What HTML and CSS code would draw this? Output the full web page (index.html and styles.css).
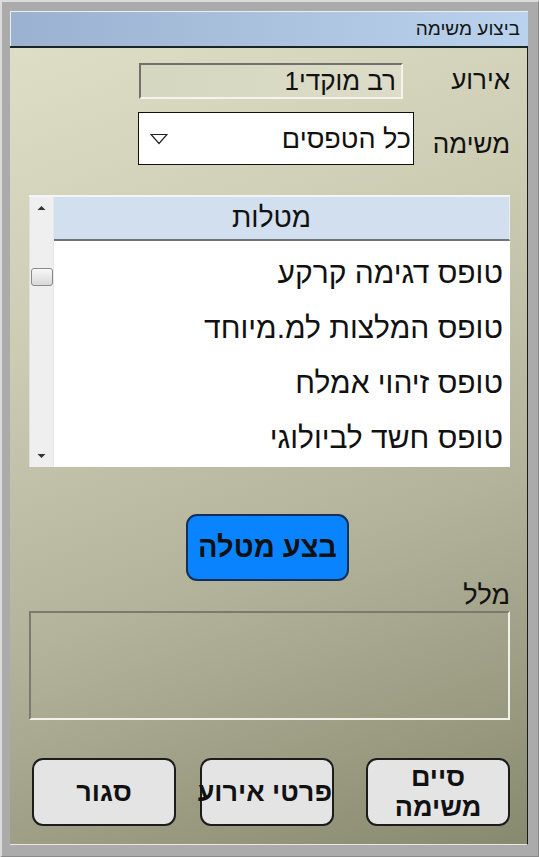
FILE: index.html
```html
<!DOCTYPE html>
<html lang="he" dir="rtl">
<head>
<meta charset="utf-8">
<title>ביצוע משימה</title>
<link rel="stylesheet" href="styles.css">
</head>
<body>
<div class="window">
  <div class="titlebar">ביצוע משימה</div>
  <div class="panel">
    <div class="field-row row-event">
      <span class="label">אירוע</span>
      <div class="readonly">רב מוקדי1</div>
    </div>
    <div class="field-row row-task">
      <span class="label">משימה</span>
      <div class="select">
        <span class="select-text">כל הטפסים</span>
        <svg class="select-arrow" width="18" height="12" viewBox="0 0 18 12"><path d="M1 1.5 H17 L9 10.5 Z" fill="none" stroke="#222" stroke-width="1.2"/></svg>
      </div>
    </div>
    <div class="list">
      <div class="list-main">
        <div class="list-header">מטלות</div>
        <div class="list-body">
          <div class="list-row">טופס דגימה קרקע</div>
          <div class="list-row">טופס המלצות למ.מיוחד</div>
          <div class="list-row">טופס זיהוי אמלח</div>
          <div class="list-row">טופס חשד לביולוגי</div>
        </div>
      </div>
      <div class="scrollbar">
        <svg class="sb-arrow" width="9" height="6" viewBox="0 0 9 6"><path d="M0.5 5 L4.5 1 L8.5 5 Z" fill="#333"/></svg>
        <div class="sb-thumb"></div>
        <div class="sb-space"></div>
        <svg class="sb-arrow" width="9" height="6" viewBox="0 0 9 6"><path d="M0.5 1 L4.5 5 L8.5 1 Z" fill="#333"/></svg>
      </div>
    </div>
    <div class="action-wrap">
      <button class="btn btn-blue">בצע מטלה</button>
    </div>
    <div class="memo-label">מלל</div>
    <div class="memo"></div>
    <div class="bottom-buttons">
      <button class="btn btn-gray btn-finish">סיים<br>משימה</button>
      <button class="btn btn-gray btn-details">פרטי אירוע</button>
      <button class="btn btn-gray btn-close">סגור</button>
    </div>
  </div>
</div>
</body>
</html>
```

FILE: styles.css
```css
* { box-sizing: border-box; }
html, body {
  margin: 0;
  padding: 0;
  width: 539px;
  height: 857px;
  overflow: hidden;
  background: #aaaaaa;
  font-family: "Liberation Sans", "DejaVu Sans", Arial, sans-serif;
  color: #111;
}
.window {
  width: 539px;
  height: 857px;
  background: #ababab;
  border-top: 2px solid #dcdcdc;
  border-left: 2px solid #dcdcdc;
  border-right: 1px solid #8a8a8a;
  border-bottom: 1px solid #8a8a8a;
  padding: 9px 10px 11px 8px;
  display: flex;
  flex-direction: column;
}
.titlebar {
  height: 35px;
  flex: 0 0 35px;
  background: linear-gradient(90deg, #9ab2cf 0%, #aac2de 50%, #bad2ee 100%);
  border-top: 1px solid #e8eef6;
  border-left: 1px solid #e8eef6;
  font-size: 19px;
  line-height: 33px;
  padding-right: 8px;
  color: #151515;
}
.panel {
  flex: 1;
  background: linear-gradient(160deg, #deddc6 0%, #cdcdb4 30%, #b2b39a 62%, #999a80 85%, #888a70 100%);
  border-top: 2px solid #1a2624;
  border-right: 1px solid #1a1a1a;
  border-bottom: 1px solid #e8e8e0;
  padding: 15px 17px 0 19px;
  display: flex;
  flex-direction: column;
}
.field-row {
  display: flex;
  align-items: center;
}
.label {
  font-size: 26px;
  flex: 0 0 96px;
  padding-right: 0;
}
.row-event .label { margin-top: -2px; }
.readonly {
  width: 264px;
  height: 36px;
  margin-right: 11px;
  border-top: 2px solid #707070;
  border-left: 2px solid #707070;
  border-bottom: 2px solid #f4f4ec;
  border-right: 2px solid #f4f4ec;
  background: linear-gradient(90deg, #d6d7c0, #dcdcc8);
  font-size: 26px;
  line-height: 32px;
  padding-right: 5px;
}
.row-task { margin-top: 13px; }
.row-task .label { padding-top: 12px; }
.select {
  width: 276px;
  height: 53px;
  background: #fff;
  border: 1px solid #111;
  display: flex;
  align-items: center;
  justify-content: space-between;
  padding: 0 2px 0 11px;
}
.select-text { font-size: 27px; padding-top: 2px; }
.select-arrow { display: block; }
.list {
  margin-top: 30px;
  height: 272px;
  display: flex;
  background: #fff;
  border-top: 2px solid #f4f4f4;
}
.list-main {
  flex: 1;
  display: flex;
  flex-direction: column;
}
.list-header {
  height: 44px;
  background: #d1dfee;
  border-bottom: 2px solid #6e7478;
  border-right: 1px solid #e8eef6;
  text-align: center;
  font-size: 28px;
  line-height: 42px;
  padding-right: 20px;
}
.list-body { padding-top: 4px; }
.list-row {
  height: 55px;
  line-height: 55px;
  font-size: 30px;
  padding-right: 7px;
}
.scrollbar {
  width: 25px;
  flex: 0 0 25px;
  background: #efefef;
  border-left: 1px solid #e0e0e0;
  border-right: 1px solid #e6e6e6;
  display: flex;
  flex-direction: column;
  align-items: center;
  padding: 8px 0 8px;
}
.sb-arrow { display: block; }
.sb-thumb {
  margin-top: 57px;
  width: 22px;
  height: 18px;
  border: 1px solid #8a8a8a;
  border-radius: 3px;
  background: linear-gradient(180deg, #f8f8f8, #d8d8d8);
}
.sb-space { flex: 1; }
.action-wrap {
  display: flex;
  justify-content: center;
  margin-top: 47px;
  padding-right: 4px;
}
.btn {
  font-family: "Liberation Sans", "DejaVu Sans", Arial, sans-serif;
  color: #111;
  border: 2px solid #1c1c1c;
  border-radius: 11px;
  cursor: pointer;
  padding: 0;
}
.btn-blue {
  width: 163px;
  height: 67px;
  background: #0a84fe;
  font-size: 29px;
  font-weight: bold;
  border-color: #14305a;
}
.memo-label {
  font-size: 27px;
  height: 30px;
  line-height: 28px;
  padding-right: 0;
}
.memo {
  height: 109px;
  border-top: 2px solid #7a7a72;
  border-left: 2px solid #7a7a72;
  border-right: 2px solid #f2f2ec;
  border-bottom: 2px solid #f2f2ec;
}
.bottom-buttons {
  margin-top: 38px;
  display: flex;
}
.btn-gray {
  height: 68px;
  background: #e4e4e4;
  font-size: 27px;
  font-weight: bold;
  line-height: 30px;
  white-space: nowrap;
}
.btn-finish { width: 144px; margin-left: 32px; }
.btn-details { width: 134px; margin-left: 24px; }
.btn-close { width: 144px; }
```
